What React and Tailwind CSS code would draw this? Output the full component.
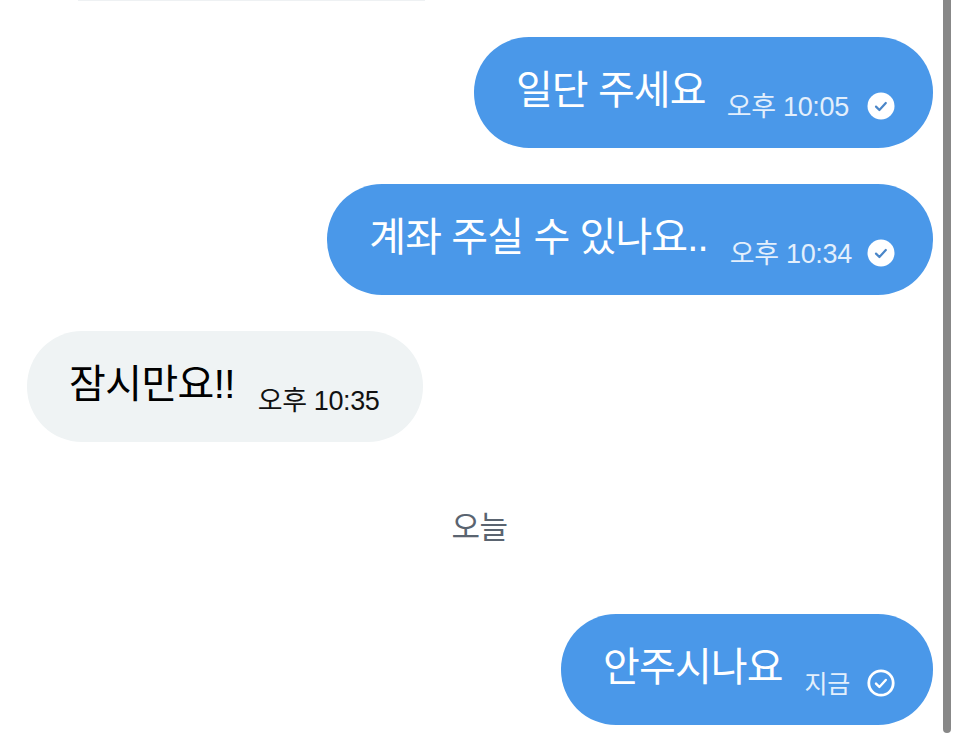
const FONT = { fontFamily: '"Liberation Sans","Noto Sans CJK KR",sans-serif' };

function Check({ filled }) {
  if (filled) {
    return (
      <svg width="28" height="28" viewBox="0 0 28 28" className="block shrink-0">
        <circle cx="14" cy="14" r="13.5" fill="#ffffff" />
        <path d="M9 14.6l3.4 3.4 6.4-7" fill="none" stroke="#4a86c8" strokeWidth="2.2" strokeLinecap="round" strokeLinejoin="round" />
      </svg>
    );
  }
  return (
    <svg width="28" height="28" viewBox="0 0 28 28" className="block shrink-0">
      <circle cx="14" cy="14" r="12.2" fill="none" stroke="#ffffff" strokeWidth="2.8" />
      <path d="M9 14.6l3.4 3.4 6.4-7" fill="none" stroke="#ffffff" strokeWidth="2.4" strokeLinecap="round" strokeLinejoin="round" />
    </svg>
  );
}

function Bubble({ text, time, mine, check, pr, timeGap, checkGap, timeSize = "text-[27px]", track = "tracking-[-0.9px]", timeTrack = "tracking-[-0.3px]" }) {
  return (
    <div className={`h-[111px] rounded-[55px] pl-[42px] flex items-start ${mine ? "bg-[#4a98e9] text-white" : "bg-[#eff3f4] text-black"} ${pr}`}>
      <span className={`text-[40px] leading-[46px] mt-[30px] whitespace-nowrap ${track}`}>{text}</span>
      <span className={`${timeSize} leading-[32px] mt-[54px] whitespace-nowrap ${timeTrack} ${timeGap} ${mine ? "text-[#e3effc]" : "text-[#111]"}`}>{time}</span>
      {check && <span className={`mt-[55px] ${checkGap}`}><Check filled={check === "filled"} /></span>}
    </div>
  );
}

export default function App() {
  return (
    <div className="w-[960px] h-[743px] bg-white overflow-hidden flex" style={FONT}>
      <div className="w-[933px] flex flex-col">
        <div className="h-px ml-[78px] w-[347px] bg-[#eef1f3] shrink-0" />
        <div className="flex justify-end mt-[36px]">
          <Bubble mine text="일단 주세요" time="오후 10:05" check="filled" pr="pr-[38px]" timeGap="ml-[21px]" checkGap="ml-[18px]" />
        </div>
        <div className="flex justify-end mt-[36px]">
          <Bubble mine text="계좌 주실 수 있나요.." time="오후 10:34" check="filled" pr="pr-[38px]" timeGap="ml-[22px]" checkGap="ml-[15px]" />
        </div>
        <div className="flex justify-start mt-[36px] ml-[27px]">
          <Bubble text="잠시만요!!" time="오후 10:35" pr="pr-[44px]" timeGap="ml-[23px]" track="tracking-[-0.6px]" timeTrack="tracking-[-0.4px]" />
        </div>
        <div className="h-[172px] flex items-center justify-center pl-[26px] text-[31px] text-[#5a6470] tracking-[-0.5px]">오늘</div>
        <div className="flex justify-end">
          <Bubble mine text="안주시나요" time="지금" check="outline" pr="pr-[38px]" timeGap="ml-[22px]" checkGap="ml-[17px]" timeSize="text-[25px]" />
        </div>
      </div>
      <div className="ml-[10px] w-[8px] h-[733px] bg-[#888888] rounded-b-[4px]" />
    </div>
  );
}
